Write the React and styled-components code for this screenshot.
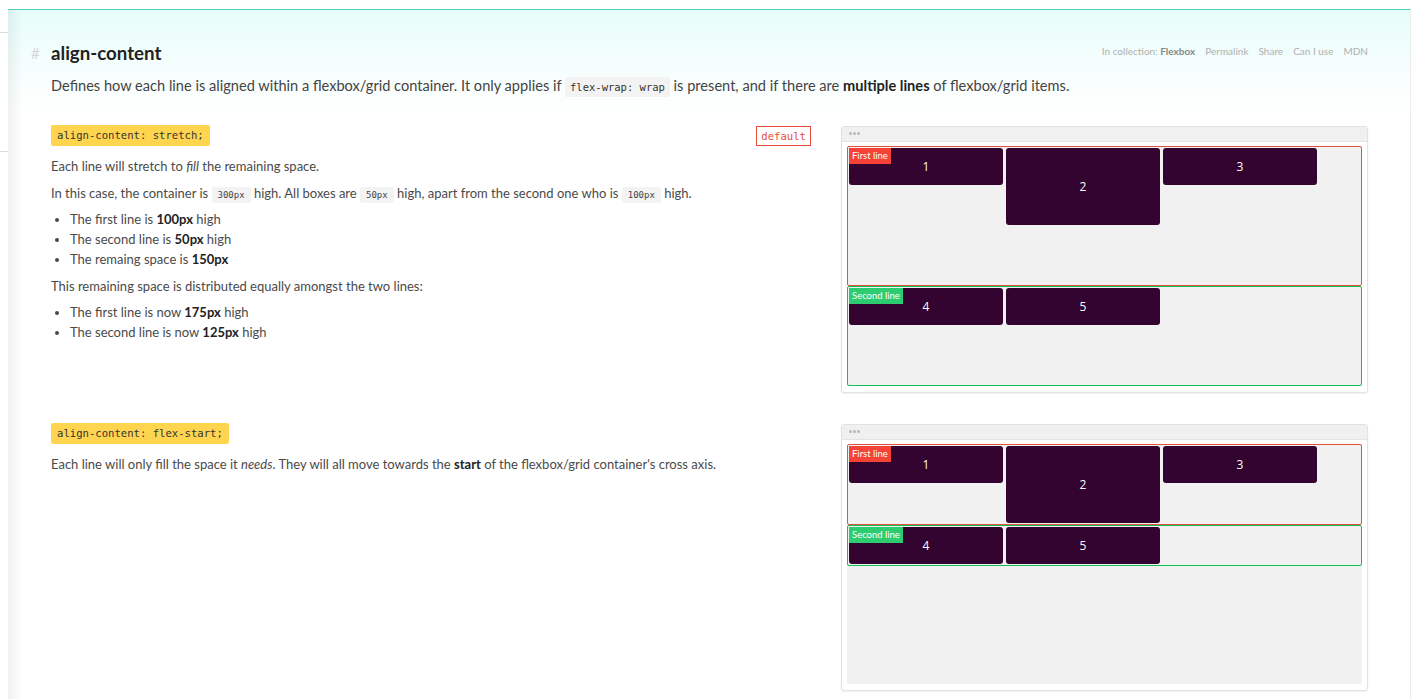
import React from 'react'
import styled, { createGlobalStyle } from 'styled-components'

const GlobalStyle = createGlobalStyle`
  html, body {
    margin: 0;
    padding: 0;
    background: #fff;
  }
  body {
    font-family: Lato, "Open Sans", sans-serif;
    color: #4a4a4a;
  }
`

const examples = [
  {
    code: 'align-content: stretch;',
    lines: [140, 100],
  },
  {
    code: 'align-content: flex-start;',
    lines: [81, 41],
  },
]

const App = () => {
  return (
    <>
      <GlobalStyle />
      <Page>
        <Sidebar>
          <SideItem $h={32} />
          <SideItem $h={118} />
        </Sidebar>
        <Main>
          <Header>
            <Hash>#</Hash>
            <Title>align-content</Title>
            <Links>
              <span>In collection: <strong>Flexbox</strong></span>
              <span>Permalink</span>
              <span>Share</span>
              <span>Can I use</span>
              <span>MDN</span>
            </Links>
          </Header>
          <Description>
            Defines how each line is aligned within a flexbox/grid container. It only applies if{' '}
            <InlineCode>flex-wrap: wrap</InlineCode> is present, and if there are{' '}
            <strong>multiple lines</strong> of flexbox/grid items.
          </Description>

          <Example $top={29}>
            <Explain>
              <LabelRow>
                <CodeLabel>{examples[0].code}</CodeLabel>
                <DefaultBadge>default</DefaultBadge>
              </LabelRow>
              <Para>Each line will stretch to <em>fill</em> the remaining space.</Para>
              <Para>
                In this case, the container is <SmallCode>300px</SmallCode> high. All boxes are{' '}
                <SmallCode>50px</SmallCode> high, apart from the second one who is{' '}
                <SmallCode>100px</SmallCode> high.
              </Para>
              <List>
                <li>The first line is <strong>100px</strong> high</li>
                <li>The second line is <strong>50px</strong> high</li>
                <li>The remaing space is <strong>150px</strong></li>
              </List>
              <Para>This remaining space is distributed equally amongst the two lines:</Para>
              <List>
                <li>The first line is now <strong>175px</strong> high</li>
                <li>The second line is now <strong>125px</strong> high</li>
              </List>
            </Explain>
            <Demo lines={examples[0].lines} />
          </Example>

          <Example $top={30}>
            <Explain>
              <LabelRow>
                <CodeLabel>{examples[1].code}</CodeLabel>
              </LabelRow>
              <Para>
                Each line will only fill the space it <em>needs</em>. They will all move towards the{' '}
                <strong>start</strong> of the flexbox/grid container's cross axis.
              </Para>
            </Explain>
            <Demo lines={examples[1].lines} />
          </Example>
        </Main>
      </Page>
    </>
  )
}

const Demo = ({ lines }) => (
  <Card>
    <CardBar>
      <Dot />
      <Dot />
      <Dot />
    </CardBar>
    <CardBody>
      <Container>
        <Line $color="#e2513f" $h={lines[0]}>
          <LineTag $color="#f44336">First line</LineTag>
          <Item>1</Item>
          <Item $tall>2</Item>
          <Item>3</Item>
        </Line>
        <Line $color="#10c050" $h={lines[1]}>
          <LineTag $color="#2ecc71">Second line</LineTag>
          <Item>4</Item>
          <Item>5</Item>
        </Line>
      </Container>
    </CardBody>
  </Card>
)

export default App

const Page = styled.div`
  display: flex;
  min-height: 699px;
`

const Sidebar = styled.div`
  width: 8px;
  flex-shrink: 0;
`

const SideItem = styled.div`
  height: ${(p) => p.$h}px;
  border-bottom: 1px solid #dcdcdc;
`

const Main = styled.div`
  flex: 1;
  margin: 9px 3px 0 0;
  border-top: 1px solid #4fcfbf;
  border-right: 1px solid #ececec;
  padding: 0 42px 0 43px;
  background:
    linear-gradient(to right, rgba(0, 0, 0, 0.055), rgba(0, 0, 0, 0) 14px),
    linear-gradient(to bottom, #e6fdfa 0px, #f6fefd 60px, #ffffff 110px);
`

const Header = styled.div`
  display: flex;
  align-items: center;
  height: 28px;
  margin-top: 29px;
`

const Hash = styled.span`
  width: 20px;
  margin-left: -20px;
  color: #d6d6d6;
  font-size: 15px;
`

const Title = styled.h1`
  margin: 0;
  font-size: 18.7px;
  font-weight: 700;
  color: #222;
`

const Links = styled.div`
  margin-left: auto;
  display: flex;
  gap: 10px;
  font-size: 10px;
  color: #b0b0b0;
  margin-top: -4px;

  strong {
    color: #888;
    font-weight: 700;
  }
`

const Description = styled.p`
  margin: 9px 0 0;
  font-size: 14.6px;
  line-height: 20px;
  color: #444;

  strong {
    color: #222;
  }
`

const InlineCode = styled.code`
  font-family: "DejaVu Sans Mono", "Liberation Mono", monospace;
  font-size: 10.5px;
  line-height: 1;
  background: #f3f3f3;
  color: #333;
  padding: 4px 5px;
  border-radius: 2px;
`

const Example = styled.section`
  display: flex;
  gap: 30px;
  margin-top: ${(p) => p.$top}px;
`

const Explain = styled.div`
  width: 760px;
  flex-shrink: 0;
  font-size: 13px;
  line-height: 20px;
  color: #4a4a4a;

  strong {
    color: #222;
  }
`

const LabelRow = styled.div`
  display: flex;
  justify-content: space-between;
  align-items: flex-start;
  margin-bottom: 10px;
`

const CodeLabel = styled.code`
  display: inline-block;
  background: #ffd54f;
  color: #333;
  font-family: "DejaVu Sans Mono", "Liberation Mono", monospace;
  font-size: 10.6px;
  line-height: 21px;
  padding: 0 6px;
  border-radius: 2px;
`

const DefaultBadge = styled.span`
  margin-top: 1px;
  border: 1px solid #e74c3c;
  color: #e74c3c;
  font-family: "DejaVu Sans Mono", "Liberation Mono", monospace;
  font-size: 10.6px;
  line-height: 18px;
  padding: 0 4px;
`

const Para = styled.p`
  margin: 7px 0 0;
`

const SmallCode = styled.code`
  font-family: "DejaVu Sans Mono", "Liberation Mono", monospace;
  font-size: 9px;
  line-height: 1;
  background: #f3f3f3;
  color: #444;
  padding: 3px 6px;
  border-radius: 2px;
`

const List = styled.ul`
  margin: 6px 0 0;
  padding-left: 19px;
`

const Card = styled.div`
  width: 525px;
  flex-shrink: 0;
  margin-top: 1px;
  border: 1px solid #e2e2e2;
  border-radius: 3px;
  box-shadow: 0 1px 2px rgba(0, 0, 0, 0.06);
  background: #fff;
  align-self: flex-start;
`

const CardBar = styled.div`
  height: 15px;
  background: #f0f0f0;
  border-bottom: 1px solid #e4e4e4;
  display: flex;
  align-items: center;
  gap: 1px;
  padding-left: 7px;
  padding-bottom: 2px;
  box-sizing: border-box;
`

const Dot = styled.span`
  width: 3px;
  height: 3px;
  border-radius: 50%;
  background: #b8b8b8;
`

const CardBody = styled.div`
  padding: 4px 5px 6px;
`

const Container = styled.div`
  height: 240px;
  background: #f1f1f1;
  display: flex;
  flex-direction: column;
`

const Line = styled.div`
  position: relative;
  flex-shrink: 0;
  height: ${(p) => p.$h}px;
  box-sizing: border-box;
  border: 1px solid ${(p) => p.$color};
  border-radius: 2px;
  padding: 1px;
  display: flex;
  align-items: flex-start;
  gap: 3px;
`

const LineTag = styled.span`
  position: absolute;
  top: 1px;
  left: 1px;
  z-index: 1;
  background: ${(p) => p.$color};
  color: #fff;
  font-family: Lato, "Open Sans", sans-serif;
  font-size: 9.5px;
  line-height: 16px;
  padding: 0 3px;
`

const Item = styled.div`
  width: 154px;
  height: ${(p) => (p.$tall ? 77 : 37)}px;
  background: #32042f;
  border-radius: 3px;
  color: #fff;
  font-family: "Open Sans", Lato, sans-serif;
  font-size: 12px;
  display: flex;
  align-items: center;
  justify-content: center;
`
